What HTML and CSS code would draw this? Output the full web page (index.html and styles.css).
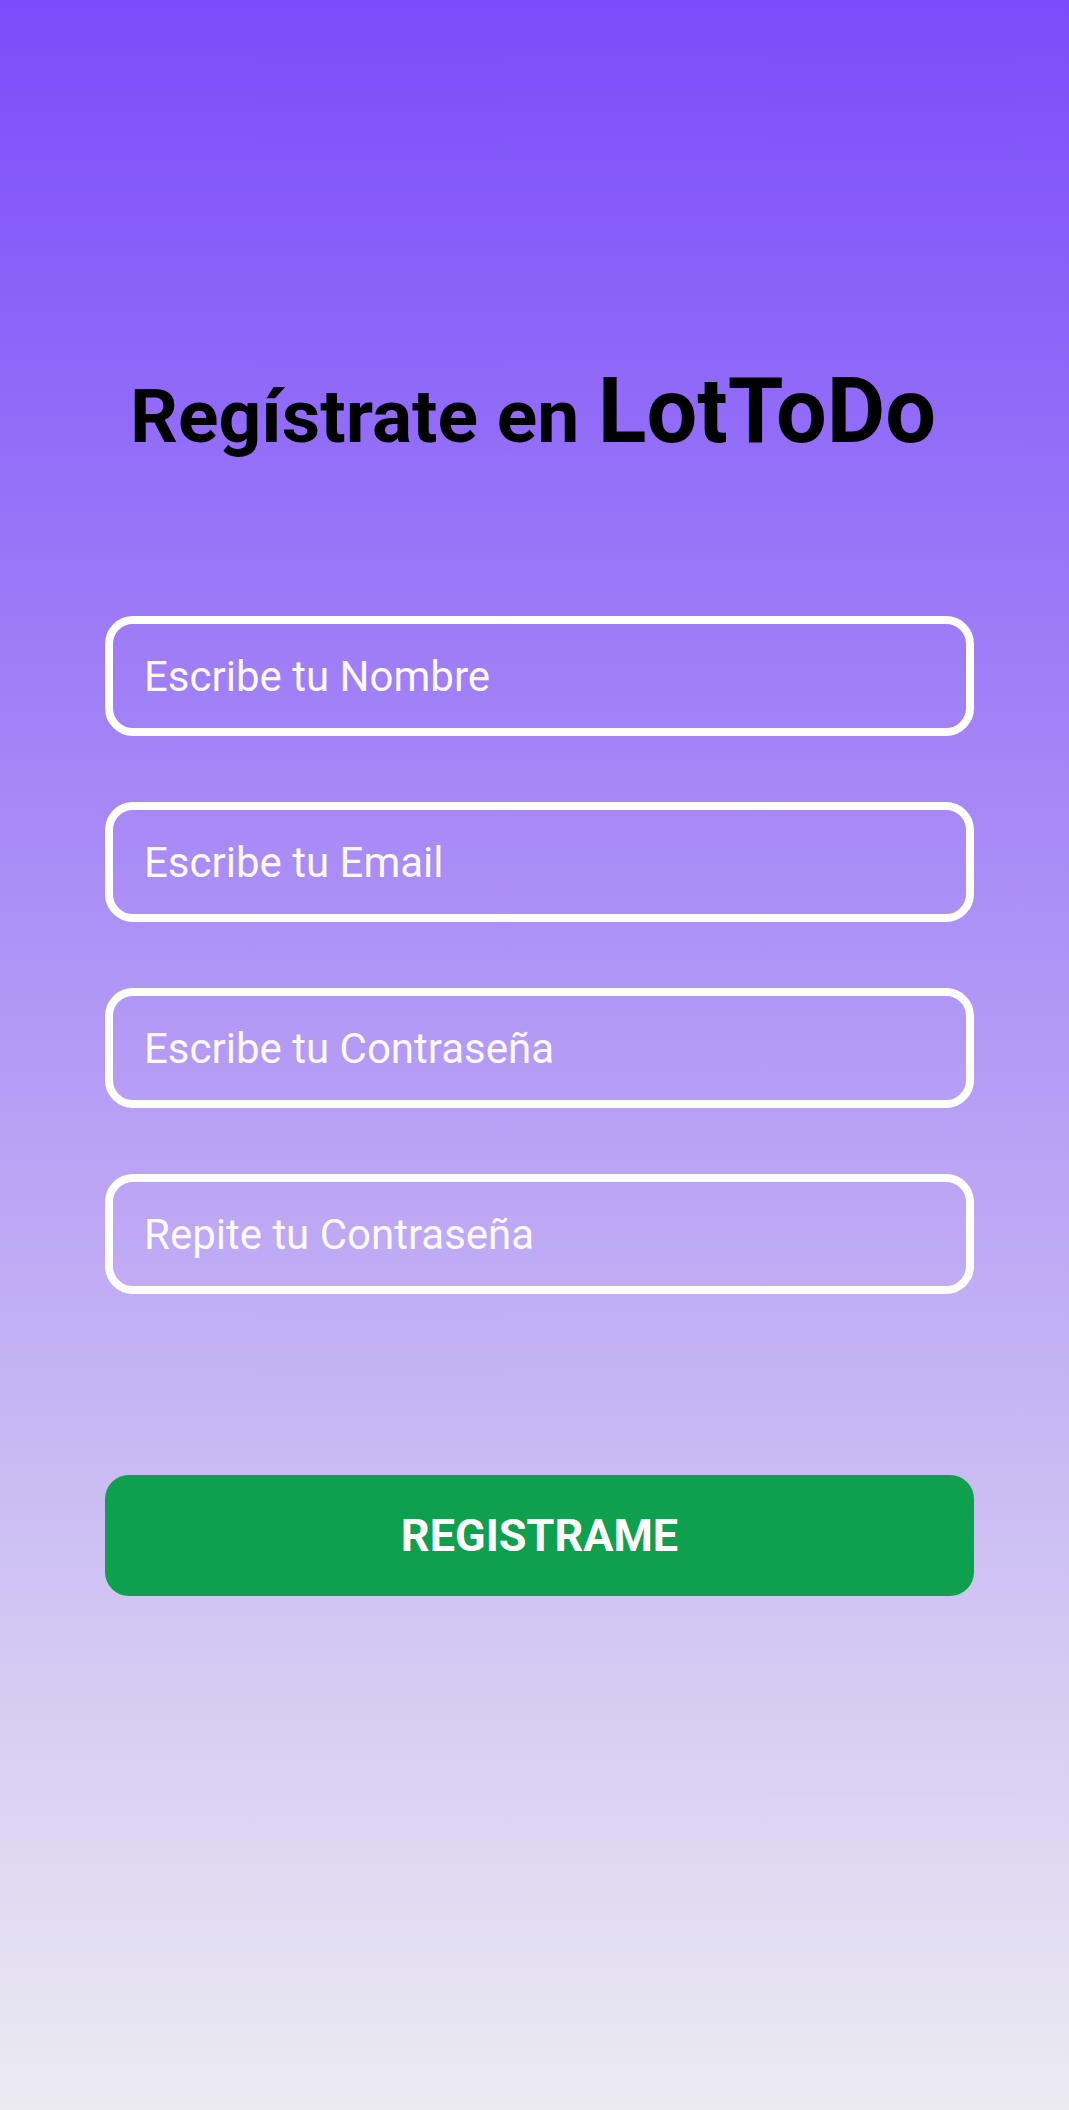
FILE: index.html
```html
<!DOCTYPE html>
<html lang="es">
<head>
<meta charset="utf-8">
<title>Regístrate en LotToDo</title>
<link rel="stylesheet" href="styles.css">
</head>
<body>
<main class="page">
  <h1 class="title">Regístrate en <span class="brand">LotToDo</span></h1>
  <form class="form">
    <input class="field" type="text" placeholder="Escribe tu Nombre">
    <input class="field" type="email" placeholder="Escribe tu Email">
    <input class="field" type="password" placeholder="Escribe tu Contraseña">
    <input class="field" type="password" placeholder="Repite tu Contraseña">
    <button class="submit" type="button">REGISTRAME</button>
  </form>
</main>
</body>
</html>
```

FILE: styles.css
```css
html, body {
  margin: 0;
  padding: 0;
}
body {
  min-height: 2110px;
  background: linear-gradient(180deg, #7b4cfa 0%, #ecebf1 100%);
  font-family: Roboto, "Liberation Sans", sans-serif;
}
.page {
  padding-top: 362px;
  display: flex;
  flex-direction: column;
  align-items: center;
}
.title {
  margin: 0 0 0 -3px;
  font-size: 75px;
  line-height: 100px;
  font-weight: 700;
  color: #000;
  text-align: center;
}
.brand {
  font-size: 90px;
}
.form {
  margin-top: 150px;
  width: 869px;
  margin-left: 10px;
  display: flex;
  flex-direction: column;
  gap: 66px;
}
.field {
  box-sizing: border-box;
  height: 120px;
  width: 100%;
  border: 8px solid #fff;
  border-radius: 28px;
  background: transparent;
  padding: 0 0 0 31px;
  font-family: Roboto, "Liberation Sans", sans-serif;
  font-size: 42px;
  color: #fff;
  outline: none;
}
.field::placeholder {
  color: #fbf9ff;
  opacity: 1;
}
.submit {
  margin-top: 115px;
  height: 121px;
  width: 100%;
  border: none;
  border-radius: 24px;
  background: #0fa04f;
  color: #fff;
  font-family: Roboto, "Liberation Sans", sans-serif;
  font-size: 45px;
  font-weight: 700;
  cursor: pointer;
}
```
